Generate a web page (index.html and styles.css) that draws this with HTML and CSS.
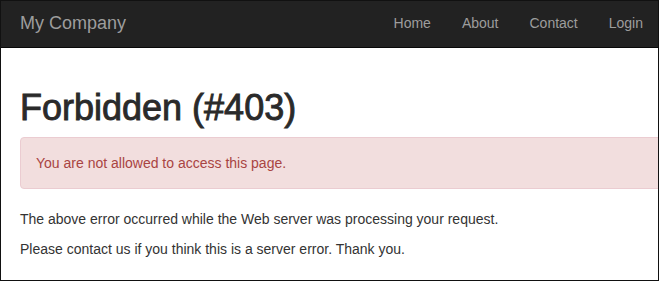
FILE: index.html
```html
<!DOCTYPE html>
<html lang="en">
<head>
    <meta charset="UTF-8">
    <meta name="viewport" content="width=device-width, initial-scale=1.0">
    <title>Forbidden (#403)</title>
    <link rel="stylesheet" href="styles.css">
</head>
<body>
    <div class="frame">
        <nav class="navbar">
            <a href="#" class="brand">My Company</a>
            <ul class="nav">
                <li><a href="#">Home</a></li>
                <li><a href="#">About</a></li>
                <li><a href="#">Contact</a></li>
                <li><a href="#">Login</a></li>
            </ul>
        </nav>

        <div class="site-error">
            <h1>Forbidden (#403)</h1>

            <div class="alert">You are not allowed to access this page.</div>

            <p>The above error occurred while the Web server was processing your request.</p>
            <p>Please contact us if you think this is a server error. Thank you.</p>
        </div>
    </div>
</body>
</html>
```

FILE: styles.css
```css
* {
    margin: 0;
    padding: 0;
    box-sizing: border-box;
}

body {
    font-family: "Liberation Sans", Arial, sans-serif;
    font-size: 14px;
    line-height: 20px;
    color: #333;
    background: #fff;
}

.frame {
    height: 281px;
    border: 1px solid #111;
    overflow: hidden;
}

.navbar {
    height: 47px;
    background: #222;
    border-bottom: 1px solid #080808;
    display: flex;
    align-items: center;
    justify-content: space-between;
    padding: 0 0 3px 19px;
}

.navbar a {
    text-decoration: none;
    color: #9d9d9d;
}

.navbar a:hover {
    color: #fff;
}

.brand {
    font-size: 18px;
    line-height: 20px;
}

.nav {
    list-style: none;
    display: flex;
}

.nav a {
    display: block;
    padding: 0 15px 0 16px;
    font-size: 14px;
}

.site-error {
    padding-left: 19px;
}

h1 {
    font-size: 36px;
    font-weight: 500;
    line-height: 40px;
    margin: 40px 0 9px;
    color: #2a2a2a;
    -webkit-text-stroke: 0.9px #2a2a2a;
}

.alert {
    padding: 15px;
    margin-bottom: 20px;
    margin-right: -20px;
    color: #a94442;
    background: #f2dede;
    border: 1px solid #ebccd1;
    border-radius: 4px;
}

p {
    margin-bottom: 10px;
}
```
